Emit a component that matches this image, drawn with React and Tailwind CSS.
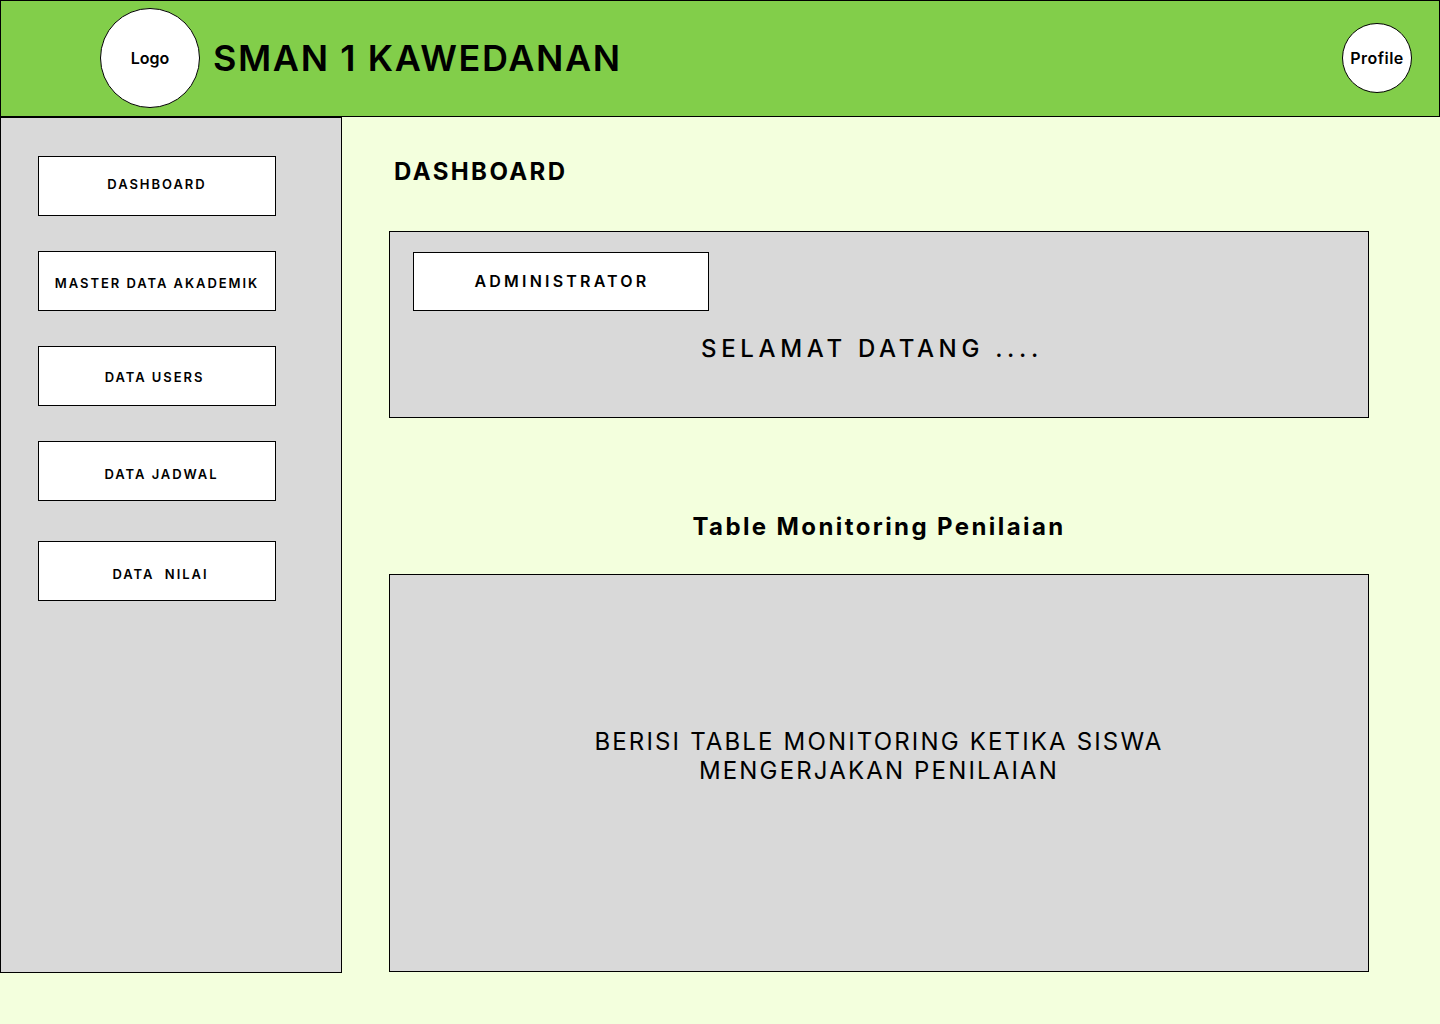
export default function App() {
  const nav = [
    { label: "DASHBOARD", cls: "mt-[38px] pb-[2px]" },
    { label: "MASTER DATA AKADEMIK", cls: "mt-[35px] pt-[5px]" },
    { label: "DATA USERS", cls: "mt-[35px] pt-[3px] pr-[5px]" },
    { label: "DATA JADWAL", cls: "mt-[35px] pt-[7px] pl-[9px]" },
    { label: "DATA  NILAI", cls: "mt-[40px] pt-[7px] pl-[7px]" },
  ];
  return (
    <div
      className="w-[1440px] h-[1024px] bg-[#F3FFDD] overflow-hidden text-black"
      style={{ fontFamily: "Inter, 'Noto Sans', sans-serif" }}
    >
      <header className="h-[117px] bg-[#82CE4A] border border-black flex items-center pb-[2px]">
        <div className="ml-[99px] w-[100px] h-[100px] rounded-full bg-white border border-black flex items-center justify-center text-[16px] font-semibold">
          Logo
        </div>
        <h1 className="ml-[13px] text-[36px] font-semibold tracking-[0.045em]">SMAN 1 KAWEDANAN</h1>
        <div className="ml-auto mr-[27px] w-[70px] h-[70px] rounded-full bg-white border border-black flex items-center justify-center text-[16px] font-semibold tracking-[0.03em]">
          Profile
        </div>
      </header>
      <div className="flex">
        <aside className="w-[342px] h-[856px] bg-[#D9D9D9] border border-black flex flex-col">
          {nav.map((n) => (
            <div
              key={n.label}
              className={`${n.cls} ml-[37px] w-[238px] h-[60px] bg-white border border-black flex items-center justify-center text-[13px] font-semibold tracking-[0.15em] whitespace-pre`}
            >
              {n.label}
            </div>
          ))}
        </aside>
        <main className="flex-1 pl-[47px]">
          <h2 className="mt-[39px] ml-[5px] text-[24px] font-bold tracking-[0.1em] leading-[32px]">DASHBOARD</h2>
          <section className="mt-[43px] w-[980px] h-[187px] bg-[#D9D9D9] border border-black flex flex-col">
            <div className="mt-[20px] ml-[23px] w-[296px] h-[59px] bg-white border border-black flex items-center justify-center pb-[2px] pl-[2px] text-[16px] font-semibold tracking-[0.2em]">
              ADMINISTRATOR
            </div>
            <p className="mt-[23px] pr-[14px] text-center text-[24px] font-medium tracking-[0.195em] leading-[30px]">SELAMAT DATANG ....</p>
          </section>
          <h3 className="mt-[93px] text-center w-[980px] text-[24px] font-bold tracking-[0.1em] leading-[32px]">Table Monitoring Penilaian</h3>
          <section className="mt-[31px] w-[980px] h-[398px] bg-[#D9D9D9] border border-black flex items-center justify-center">
            <p className="text-center text-[24px] tracking-[0.09em] leading-[29px] -mt-[34px]">
              BERISI TABLE MONITORING KETIKA SISWA
              <br />
              MENGERJAKAN PENILAIAN
            </p>
          </section>
        </main>
      </div>
    </div>
  );
}
